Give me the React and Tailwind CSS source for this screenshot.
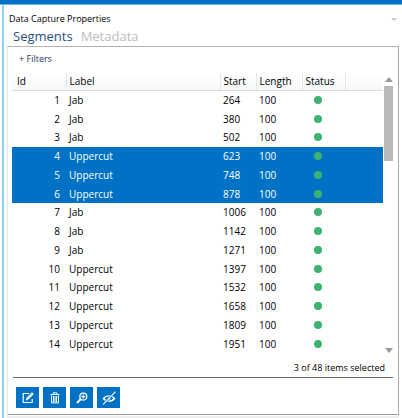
import { useState } from "react";

const STARTS = [264, 380, 502, 623, 748, 878, 1006, 1142, 1271, 1397, 1532, 1658, 1809, 1951];
const SEGMENTS = STARTS.map((start, i) => ({
  id: i + 1,
  label: i < 3 || (i > 5 && i < 9) ? "Jab" : "Uppercut",
  start,
  length: 100,
}));

function HeaderCell({ children, className = "pl-[3px]" }) {
  return (
    <th scope="col" className={`border-r border-b border-r-[#e3e5e8] border-b-[#d9dbde] py-0 pr-0 text-left font-normal ${className}`}>
      {children}
    </th>
  );
}

function ToolButton({ label, children }) {
  return (
    <button type="button" aria-label={label} className="flex h-[21px] w-[23px] items-center justify-center bg-[#0072c6] text-white">
      <svg viewBox="0 0 14 14" className="size-[14px]" fill="none" stroke="currentColor" strokeWidth="1.2">
        {children}
      </svg>
    </button>
  );
}

function SegmentTable() {
  const [selected, setSelected] = useState([4, 5, 6]);
  const toggle = (id) =>
    setSelected(selected.includes(id) ? selected.filter((s) => s !== id) : [...selected, id]);
  return (
    <table className="h-[280px] flex-1 table-fixed border-collapse text-[10px] leading-4 text-black">
      <colgroup>
        <col className="w-[54px]" />
        <col />
        <col className="w-9" />
        <col className="w-[46px]" />
        <col className="w-[43px]" />
        <col className="w-[38px]" />
      </colgroup>
      <thead className="bg-linear-to-b from-white to-[#f7f8f9]">
        <tr className="h-[17px]">
          <HeaderCell className="pl-[5px]">Id</HeaderCell>
          <HeaderCell>Label</HeaderCell>
          <HeaderCell>Start</HeaderCell>
          <HeaderCell>Length</HeaderCell>
          <HeaderCell>Status</HeaderCell>
          <th className="border-b border-b-[#d9dbde] p-0" />
        </tr>
      </thead>
      <tbody>
        {SEGMENTS.map((s) => (
          <tr
            key={s.id}
            onClick={() => toggle(s.id)}
            className={selected.includes(s.id) ? "bg-[#0072c6] text-white" : ""}
          >
            <td className="p-0 pr-1.5 text-right">{s.id}</td>
            <td className="p-0 pl-[3px]">{s.label}</td>
            <td className="p-0 pl-[3px]">{s.start}</td>
            <td className="p-0 pl-[3px]">{s.length}</td>
            <td className="p-0 pl-3">
              <span role="img" aria-label="OK" className="block size-2 rounded-full bg-[#3cb371]" />
            </td>
            <td className="p-0" />
          </tr>
        ))}
      </tbody>
    </table>
  );
}

export default function App() {
  return (
    <div className="flex min-h-screen flex-col bg-white font-['Open_Sans','Noto_Sans',sans-serif]">
      <div className="h-[5px] border-b border-[#6fb4e4] bg-[#0072c6]" />
      <div className="flex flex-1 pl-[2px]">
        <div className="w-[2px] bg-[#8dd0fa]" />
        <div className="flex flex-1 flex-col pr-[3px] pl-[3px]">
          <header className="flex items-center justify-between pt-1.5 pl-0.5">
            <h1 className="text-[9px] leading-4 text-black">Data Capture Properties</h1>
            <button type="button" aria-label="Panel menu" className="pr-0.5">
              <svg viewBox="0 0 6 3" className="h-[3px] w-1.5"><path d="M0 0h6L3 3z" fill="#c5cad3" /></svg>
            </button>
          </header>
          <nav className="flex gap-2 pl-1.5 text-[13px] leading-[19px]">
            <button type="button" className="text-[#1f5082]">Segments</button>
            <button type="button" className="text-[#bcbcbc]">Metadata</button>
          </nav>
          <main className="flex flex-col border border-t-[#b4b4b4] border-r-[#a8a8a8] border-b-[#a0a0a0] border-l-[#e6e6e6] pr-[5px] pl-1">
            <button type="button" className="mt-1 self-start pl-[7px] text-[9px] leading-4 text-[#1e395b]">+ Filters</button>
            <div className="mt-1.5 flex">
              <SegmentTable />
              <div className="ml-px flex w-[9px] flex-col items-center pt-1">
                <svg viewBox="0 0 8 5" className="h-[5px] w-2"><path d="M0 5h8L4 0z" fill="#999" /></svg>
                <div className="mt-1 h-[75px] w-[9px] bg-[#b9b9b9]" />
                <svg viewBox="0 0 8 5" className="mt-auto h-[5px] w-2"><path d="M0 0h8L4 5z" fill="#999" /></svg>
              </div>
            </div>
            <p className="mt-[7px] pr-2 pb-px text-right text-[9px] leading-4 text-black">3 of 48 items selected</p>
            <div className="ml-px border-t border-[#6a6a6a]" />
            <div className="flex gap-1 pt-[9px] pb-1.5 pl-1">
              <ToolButton label="Edit">
                <path d="M8 2.5H2.2v9h9V8" />
                <path d="M5 9.2l.6-2.1L11 1.6l1.5 1.5L7 8.6z" fill="currentColor" strokeWidth=".5" />
              </ToolButton>
              <ToolButton label="Delete">
                <path d="M2.5 3.5h9M5.2 3V1.8h3.6V3M3.5 4.5v7.4h7V4.5M5.5 5v6M7 5v6M8.6 5v6" strokeWidth="1" />
              </ToolButton>
              <ToolButton label="Zoom">
                <circle cx="8.3" cy="5.6" r="3.5" />
                <path d="M8.3 3.6v4M6.3 5.6h4" strokeWidth="1.1" />
                <path d="M5.6 8.3L2 12" strokeWidth="2" />
              </ToolButton>
              <ToolButton label="Hide">
                <path d="M1.5 7.5C4 4 10 4 12.5 7.5C10 11 4 11 1.5 7.5z" strokeWidth="1.4" />
                <circle cx="7" cy="7.4" r="1.5" fill="currentColor" stroke="none" />
                <path d="M13.5 .7L1.2 13.3" stroke="#0072c6" strokeWidth="2.2" />
                <path d="M13.5 .7L1.2 13.3" strokeWidth="1.1" />
              </ToolButton>
            </div>
          </main>
          <div className="mt-px flex-1 bg-[#eeeeee]" />
        </div>
      </div>
    </div>
  );
}
